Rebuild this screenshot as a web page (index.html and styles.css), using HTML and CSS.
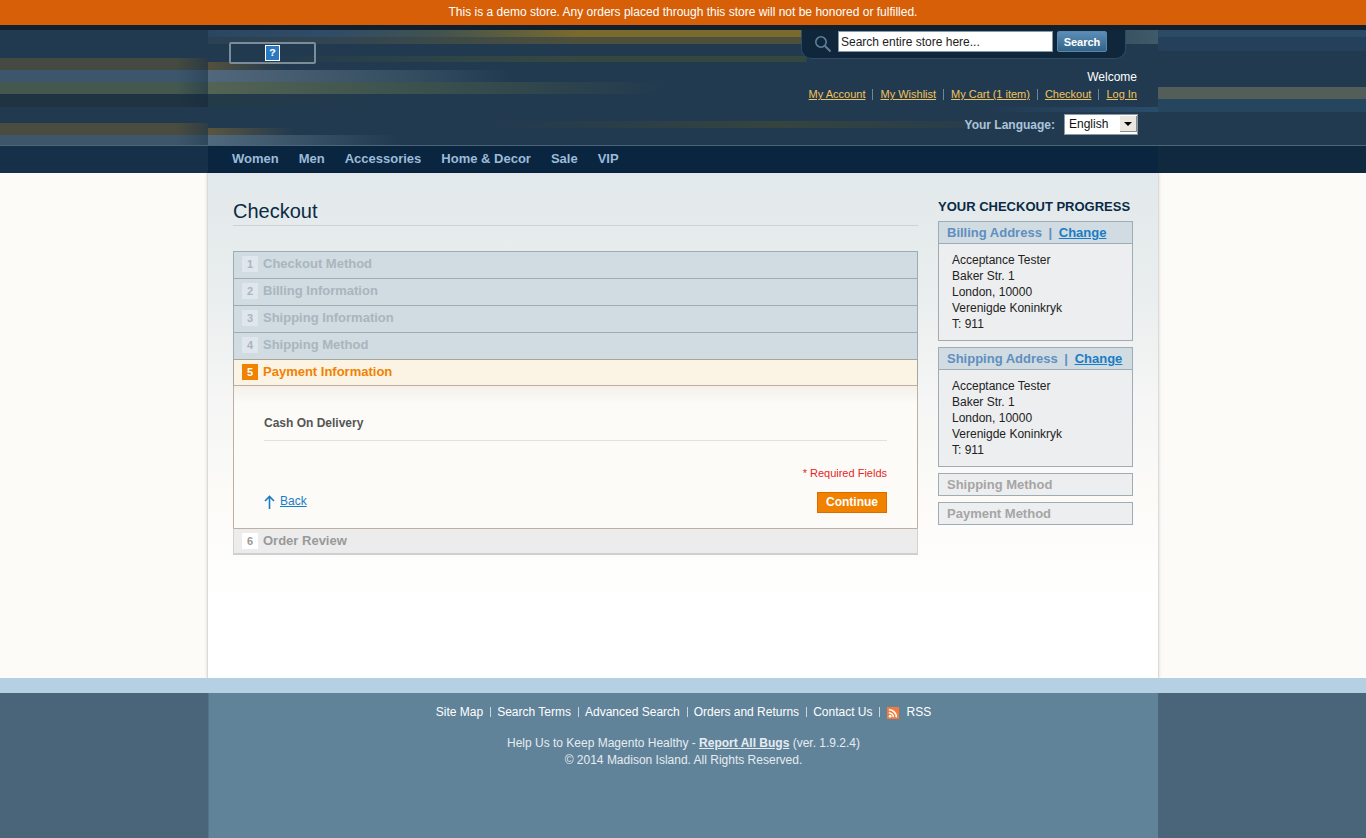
FILE: index.html
```html
<!DOCTYPE html>
<html lang="en">
<head>
    <meta charset="UTF-8">
    <meta name="viewport" content="width=device-width, initial-scale=1.0">
    <title>Checkout</title>
    <link rel="stylesheet" href="styles.css">
</head>
<body>
    <p class="demo-notice">This is a demo store. Any orders placed through this store will not be honored or fulfilled.</p>

    <header class="header-bg">
        <div class="header">
            <div class="header-main">
                <a class="logo" href="#"><span class="broken-img">?</span></a>
                <div class="header-right">
                    <form class="search">
                        <svg class="search-icon" width="18" height="18" viewBox="0 0 18 18" fill="none" stroke="#5f8199">
                            <circle cx="7" cy="7" r="5.2" stroke-width="1.6"/>
                            <path d="M11 11l5.5 5.5" stroke-width="2"/>
                        </svg>
                        <input class="search-input" type="text" value="Search entire store here...">
                        <button class="search-button" type="button">Search</button>
                    </form>
                    <p class="welcome">Welcome</p>
                    <ul class="top-links">
                        <li><a href="#">My Account</a></li>
                        <li><a href="#">My Wishlist</a></li>
                        <li><a href="#">My Cart (1 item)</a></li>
                        <li><a href="#">Checkout</a></li>
                        <li><a href="#">Log In</a></li>
                    </ul>
                    <div class="language">
                        <label for="lang">Your Language:</label>
                        <span class="select-wrap">
                            <select id="lang"><option>English</option></select>
                            <span class="select-arrow"></span>
                        </span>
                    </div>
                </div>
            </div>
            <nav class="nav">
                <a href="#">Women</a>
                <a href="#">Men</a>
                <a href="#">Accessories</a>
                <a href="#">Home &amp; Decor</a>
                <a href="#">Sale</a>
                <a href="#">VIP</a>
            </nav>
        </div>
    </header>

    <div class="main-bg">
        <main class="main">
            <section class="col-main">
                <h1 class="page-title">Checkout</h1>
                <ol class="steps">
                    <li class="step"><span class="step-num">1</span>Checkout Method</li>
                    <li class="step"><span class="step-num">2</span>Billing Information</li>
                    <li class="step"><span class="step-num">3</span>Shipping Information</li>
                    <li class="step"><span class="step-num">4</span>Shipping Method</li>
                    <li class="step step-active"><span class="step-num">5</span>Payment Information</li>
                    <li class="step-body">
                        <p class="method-name">Cash On Delivery</p>
                        <p class="required">* Required Fields</p>
                        <div class="actions">
                            <a class="back" href="#">
                                <svg width="11" height="14" viewBox="0 0 11 14" fill="none" stroke="#1a7cc4" stroke-width="1.6">
                                    <path d="M5.5 14V1.5M1 6l4.5-4.5L10 6"/>
                                </svg>
                                <span>Back</span>
                            </a>
                            <button class="continue" type="button">Continue</button>
                        </div>
                    </li>
                    <li class="step step-last"><span class="step-num">6</span>Order Review</li>
                </ol>
            </section>

            <aside class="sidebar">
                <h2 class="progress-title">Your Checkout Progress</h2>
                <div class="progress-box">
                    <h3 class="progress-head">Billing Address <span class="sep">|</span> <a href="#">Change</a></h3>
                    <address class="progress-address">Acceptance Tester<br>Baker Str. 1<br>London, 10000<br>Verenigde Koninkryk<br>T: 911</address>
                </div>
                <div class="progress-box">
                    <h3 class="progress-head">Shipping Address <span class="sep">|</span> <a href="#">Change</a></h3>
                    <address class="progress-address">Acceptance Tester<br>Baker Str. 1<br>London, 10000<br>Verenigde Koninkryk<br>T: 911</address>
                </div>
                <div class="progress-box progress-todo">Shipping Method</div>
                <div class="progress-box progress-todo">Payment Method</div>
            </aside>
        </main>
    </div>

    <footer class="footer-bg">
        <div class="footer">
            <ul class="footer-links">
                <li><a href="#">Site Map</a></li>
                <li><a href="#">Search Terms</a></li>
                <li><a href="#">Advanced Search</a></li>
                <li><a href="#">Orders and Returns</a></li>
                <li><a href="#">Contact Us</a></li>
                <li class="footer-rss">
                    <a class="rss" href="#">
                        <svg width="12" height="12" viewBox="0 0 13 13">
                            <rect width="13" height="13" fill="#f37b3c"/>
                            <circle cx="3.4" cy="10" r="1.5" fill="#fff"/>
                            <path d="M2 6.2a5 5 0 0 1 5 4.8M2 3a8 8 0 0 1 8.2 8" fill="none" stroke="#fff" stroke-width="1.7"/>
                        </svg>
                        RSS
                    </a>
                </li>
            </ul>
            <p class="footer-text">Help Us to Keep Magento Healthy - <a href="#">Report All Bugs</a> (ver. 1.9.2.4)</p>
            <p class="footer-text">&copy; 2014 Madison Island. All Rights Reserved.</p>
        </div>
    </footer>
</body>
</html>
```

FILE: styles.css
```css
* {
    box-sizing: border-box;
}
body {
    margin: 0;
    font-family: "Liberation Sans", Arial, sans-serif;
    font-size: 12px;
    color: #222;
    background-color: #fcfbf7;
}
a {
    color: inherit;
}
ul, ol {
    list-style: none;
    margin: 0;
    padding: 0;
}

.demo-notice {
    margin: 0;
    height: 25px;
    line-height: 24px;
    text-align: center;
    color: #fff;
    background-color: #d75f07;
}

/* header stripes, the outer ones are a flat picture in the original */
.header-bg {
    height: 148px;
    background-color: #223a50;
    background-repeat: no-repeat;
    background-image:
        linear-gradient(#10202e, #10202e),
        linear-gradient(90deg, #444a42 85%, #2b3b42 100%),
        linear-gradient(90deg, #3e566c 85%, #30485c 100%),
        linear-gradient(90deg, #44584f 85%, #30454a 100%),
        linear-gradient(90deg, #1f3342 85%, #1c2f40 100%),
        linear-gradient(90deg, #4a4c3f 85%, #2f3e44 100%),
        linear-gradient(90deg, #3f566a 85%, #2f475c 100%),
        linear-gradient(#4c6678, #4c6678),
        linear-gradient(#153048, #153048),
        linear-gradient(#2b4a63, #2b4a63),
        linear-gradient(#25405a, #25405a),
        linear-gradient(#525e57, #525e57),
        linear-gradient(#26455f, #26455f),
        linear-gradient(#10293f, #10293f);
    background-size:
        100% 5px,
        208px 12px, 208px 12px, 208px 12px, 208px 13px, 208px 12px, 208px 10px,
        100% 1px,
        50% 27px,
        50% 7px, 50% 14px, 50% 12px, 50% 13px, 50% 27px;
    background-position:
        0 0,
        0 33px, 0 45px, 0 57px, 0 69px, 0 98px, 0 110px,
        0 120px,
        0 121px,
        100% 5px, 100% 12px, 100% 62px, 100% 74px, 100% 121px;
}
.header {
    width: 950px;
    height: 148px;
    margin: 0 auto;
    padding-top: 5px;
    background-repeat: no-repeat;
    background-color: #223a50;
    background-image:
        linear-gradient(#10202e, #10202e),
        linear-gradient(90deg, #2b4660 0%, #2f4c68 20%, #41524f 38%, #7a6a2d 62%, #7a6a2d 100%),
        linear-gradient(90deg, #2a4054 0%, #33464f 25%, #4f503c 62%),
        linear-gradient(90deg, #223a50 10%, #2f4446 40%, #354840 62%),
        linear-gradient(90deg, #55503f 0%, #223a50 8%),
        linear-gradient(90deg, #50677c 0%, #344c60 22%, #223a50 32%),
        linear-gradient(90deg, #526454 0%, #344a4c 30%, #223a50 48%),
        linear-gradient(90deg, #233a48 0%, #223a50 20%),
        linear-gradient(90deg, #223a50 30%, #35443f 60%, #223a50 90%),
        linear-gradient(90deg, #5b553f 0%, #223a50 9%),
        linear-gradient(90deg, #51697c 0%, #223a50 20%),
        linear-gradient(90deg, #223a50 82%, #66695b 96%, #6e7260 100%),
        linear-gradient(90deg, #223a50 82%, #2a4d6c 100%),
        linear-gradient(90deg, #223a50 85%, #3f5a68 100%),
        linear-gradient(#4c6678, #4c6678),
        linear-gradient(#0a2540, #0a2540);
    background-size:
        100% 5px,
        63% 7px, 63% 7px, 63% 6px,
        100% 12px, 100% 12px, 100% 12px, 100% 13px,
        100% 7px, 100% 12px, 100% 10px,
        100% 12px, 100% 13px, 100% 14px,
        100% 1px, 100% 27px;
    background-position:
        0 0,
        0 5px, 0 12px, 0 31px,
        0 33px, 0 45px, 0 57px, 0 69px,
        0 96px, 0 98px, 0 110px,
        0 62px, 0 74px, 0 5px,
        0 120px, 0 121px;
}
.header-main {
    display: flex;
    justify-content: space-between;
    height: 116px;
    padding: 0 21px;
}
.logo {
    display: flex;
    align-items: flex-start;
    justify-content: center;
    width: 87px;
    height: 22px;
    margin-top: 12px;
    padding-top: 1px;
    border: 2px solid #7d8c99;
    border-radius: 2px;
    text-decoration: none;
}
.broken-img {
    width: 15px;
    height: 16px;
    border: 1px solid #fff;
    background-color: #2a78bf;
    color: #fff;
    font: bold 11px/14px "Liberation Mono", monospace;
    text-align: center;
}
.header-right {
    display: flex;
    flex-direction: column;
    align-items: flex-end;
}
.search {
    display: flex;
    align-items: flex-start;
    width: 325px;
    height: 29px;
    margin-right: 11px;
    padding: 1px 0 0 12px;
    background-color: #10263a;
    border: 1px solid #2a4a66;
    border-top: none;
    border-radius: 0 0 10px 10px;
}
.search-icon {
    flex: none;
    margin: 4px 6px 0 0;
}
.search-input {
    width: 215px;
    height: 21px;
    padding: 0 2px;
    border: 1px solid #7f99ad;
    font: 12px "Liberation Sans", Arial, sans-serif;
    color: #222;
    background-color: #fff;
}
.search-button {
    width: 50px;
    height: 21px;
    margin-left: 4px;
    padding: 0;
    border: 1px solid #5a87ab;
    border-radius: 2px;
    background: linear-gradient(#5c8db6, #326489);
    color: #fff;
    font: bold 11px "Liberation Sans", Arial, sans-serif;
}
.welcome {
    margin: 10px 0 0;
    line-height: 16px;
    color: #fff;
}
.top-links {
    display: flex;
    margin-top: 1px;
    font-size: 11px;
    line-height: 16px;
    color: #f2c35c;
}
.top-links li + li {
    margin-left: 7px;
    padding-left: 8px;
    background: linear-gradient(#6f8598, #6f8598) 0 3px / 1px 11px no-repeat;
}
.language {
    display: flex;
    align-items: center;
    margin: 12px -1px 0 0;
}
.language label {
    margin-right: 9px;
    font-weight: bold;
    color: #a9c5de;
}
.select-wrap {
    position: relative;
    display: block;
    width: 74px;
    height: 21px;
}
.select-wrap select {
    appearance: none;
    display: block;
    width: 100%;
    height: 100%;
    padding: 0 0 2px 4px;
    border: 1px solid #8a99a5;
    border-radius: 0;
    background-color: #fff;
    color: #111;
    font: 12px "Liberation Sans", Arial, sans-serif;
}
.select-arrow {
    position: absolute;
    top: 2px;
    right: 1px;
    width: 17px;
    height: 16px;
    background-color: #e9e7df;
    border-right: 1px solid #8d8b85;
    border-bottom: 1px solid #8d8b85;
}
.select-arrow::after {
    content: "";
    position: absolute;
    top: 6px;
    left: 4px;
    border: 4px solid transparent;
    border-top: 4px solid #000;
}
.nav {
    display: flex;
    gap: 20px;
    height: 27px;
    padding: 5px 0 0 24px;
    font-size: 13px;
    font-weight: bold;
    line-height: 16px;
}
.nav a {
    color: #9cbbd8;
    text-decoration: none;
}

.main-bg {
    height: 505px;
}
.main {
    display: flex;
    width: 952px;
    height: 505px;
    margin: 0 auto;
    padding: 0 0 0 25px;
    background-image: linear-gradient(#e2e9ec 0, #e9eded 22%, #f5f6f5 45%, #fcfbf8 65%, #fff 85%);
    border-left: 1px solid #dcdbd6;
    border-right: 1px solid #dcdbd6;
    box-shadow: 0 0 3px rgba(0, 0, 0, 0.15);
}
.col-main {
    width: 685px;
    padding-top: 26px;
}
.page-title {
    margin: 0 0 25px;
    height: 27px;
    padding-bottom: 3px;
    border-bottom: 1px solid #ccd2d5;
    font-size: 20px;
    font-weight: normal;
    line-height: 24px;
    color: #0a2a45;
}
.steps {
    font-size: 13px;
    font-weight: bold;
}
.step {
    display: flex;
    align-items: flex-start;
    height: 27px;
    padding: 4px 0 0 8px;
    background-color: #d0dbe2;
    border: 1px solid #a0acb4;
    border-bottom: none;
    color: #aab5bd;
    line-height: 16px;
}
.step-num {
    flex: none;
    width: 16px;
    height: 16px;
    margin-right: 5px;
    background-color: #dfe7ec;
    font-size: 11px;
    line-height: 16px;
    text-align: center;
}
.step-active {
    height: 27px;
    background-color: #fbf3e4;
    border-color: #a8a59b;
    border-bottom: 1px solid #bdb0a0;
    color: #f18200;
}
.step-active .step-num {
    background-color: #f18200;
    color: #fff;
}
.step-body {
    height: 142px;
    padding: 30px 30px 0;
    background-image: linear-gradient(#f4f1ea, #fcfbf8 18px);
    border-left: 1px solid #bdb0a0;
    border-right: 1px solid #bdb0a0;
    font-size: 12px;
    font-weight: normal;
}
.method-name {
    margin: 0;
    height: 25px;
    padding-bottom: 9px;
    border-bottom: 1px solid #e3e1de;
    color: #555;
    font-weight: bold;
    line-height: 15px;
}
.required {
    margin: 25px 0 0;
    font-size: 11px;
    line-height: 15px;
    text-align: right;
    color: #e6261a;
}
.actions {
    display: flex;
    justify-content: space-between;
    align-items: flex-start;
    margin-top: 11px;
}
.back {
    display: flex;
    align-items: flex-start;
    gap: 5px;
    padding-top: 2px;
    color: #1a7cc4;
    line-height: 14px;
}
.back svg {
    margin-top: 1px;
}
.continue {
    width: 70px;
    height: 21px;
    padding: 0 0 2px;
    background-color: #f18200;
    border: 1px solid #de6a00;
    color: #fff;
    font: bold 12px "Liberation Sans", Arial, sans-serif;
}
.step-last {
    height: 27px;
    background-color: #edecec;
    border: 1px solid #d2d2d2;
    border-top: 1px solid #bdb0a0;
    border-bottom: 2px solid #cfcfcf;
    color: #999;
}
.step-last .step-num {
    background-color: #fff;
}

.sidebar {
    width: 195px;
    margin-left: 20px;
    padding-top: 25px;
}
.progress-title {
    margin: 0 0 6px;
    font-size: 13px;
    line-height: 17px;
    text-transform: uppercase;
    white-space: nowrap;
    color: #0a2a45;
}
.progress-box {
    margin-bottom: 6px;
    background-color: #edeeef;
    border: 1px solid #a0acb4;
}
.progress-head {
    height: 22px;
    margin: 0;
    padding-left: 8px;
    background-color: #d0dbe2;
    border-bottom: 1px solid #a0acb4;
    font-size: 13px;
    line-height: 22px;
    color: #5f8fbf;
}
.progress-head a {
    color: #1a7cc4;
}
.progress-head .sep {
    margin: 0 3px;
}
.progress-address {
    height: 96px;
    padding: 8px 0 0 13px;
    font-style: normal;
    line-height: 16px;
}
.progress-todo {
    height: 23px;
    padding-left: 8px;
    font-size: 13px;
    font-weight: bold;
    line-height: 21px;
    color: #a5a5a5;
}

.footer-bg {
    height: 160px;
    padding-top: 15px;
    background-color: #4a6579;
    background-image: linear-gradient(#b6d0e3, #b6d0e3);
    background-size: 100% 15px;
    background-repeat: no-repeat;
}
.footer {
    width: 950px;
    height: 145px;
    margin: 0 auto;
    padding-top: 11px;
    background-color: #60839a;
    border-left: 1px solid #56758a;
    text-align: center;
    color: #e6ecf0;
}
.footer-links {
    display: flex;
    justify-content: center;
    height: 16px;
    margin-bottom: 15px;
    line-height: 16px;
    color: #fff;
}
.footer-links a {
    text-decoration: none;
}
.footer-links li + li {
    margin-left: 7px;
    padding-left: 7px;
    background: linear-gradient(#c8d6df, #c8d6df) 0 3px / 1px 10px no-repeat;
}
.footer-links .footer-rss {
    padding-left: 8px;
}
.rss {
    display: flex;
    align-items: flex-start;
    gap: 7px;
}
.rss svg {
    margin-top: 3px;
}
.footer-text {
    margin: 0;
    line-height: 17px;
}
.footer-text a {
    font-weight: bold;
}
```
